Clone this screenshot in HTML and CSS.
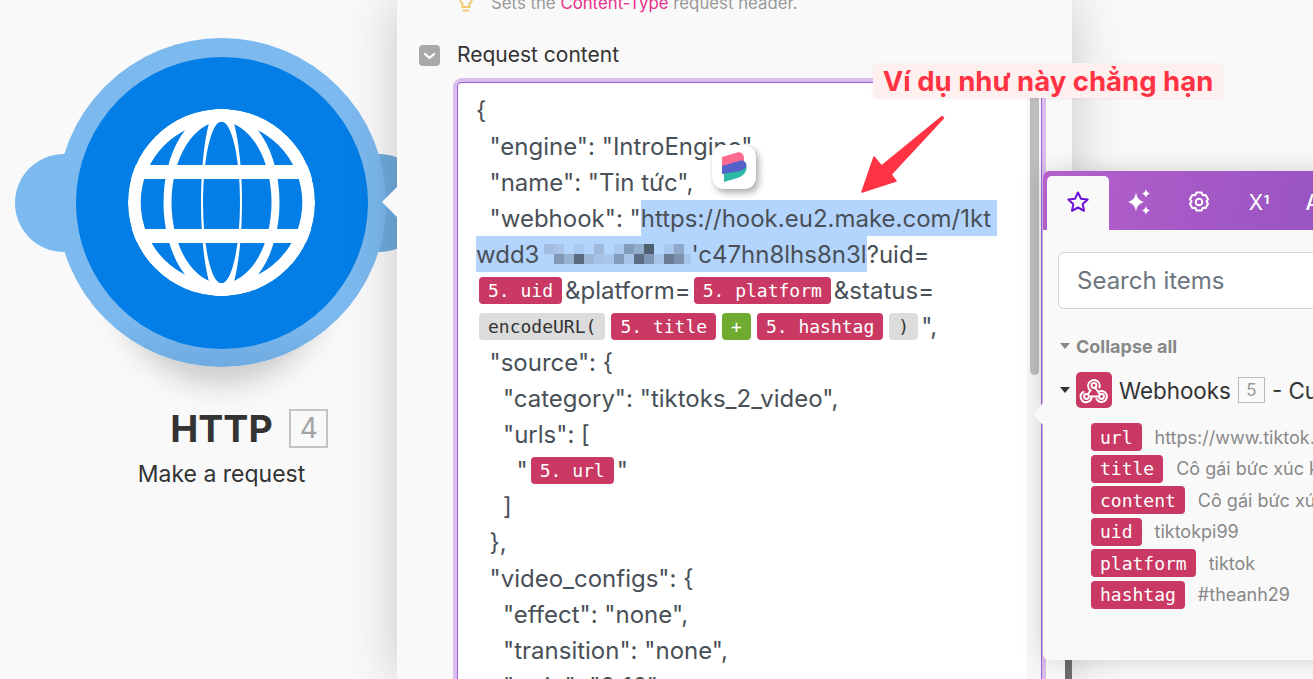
FILE: index.html
```html
<!DOCTYPE html>
<html lang="vi">
<head>
<meta charset="utf-8">
<title>HTTP - Make a request</title>
<link rel="stylesheet" href="styles.css">
</head>
<body>
<div class="canvas">
  <div class="module">
    <div class="node">
      <span class="bump bump-left"></span>
      <span class="bump bump-right"></span>
      <div class="node-ring">
        <div class="node-core">
          <svg class="globe" viewBox="0 0 187 187" width="187" height="187">
            <defs><clipPath id="gc"><circle cx="93.5" cy="93.5" r="93.5"/></clipPath></defs>
            <g clip-path="url(#gc)" fill="#fff">
              <path fill-rule="evenodd" d="M0 93.5a93.5 93.5 0 1 0 187 0a93.5 93.5 0 1 0-187 0ZM12.7 93.5a80.8 80.8 0 1 1 161.6 0a80.8 80.8 0 1 1-161.6 0Z"/>
              <path fill-rule="evenodd" d="M35.5 93.5a58 93 0 1 0 116 0a58 93 0 1 0-116 0ZM43.5 93.5a50 81 0 1 1 100 0a50 81 0 1 1-100 0Z"/>
              <path fill-rule="evenodd" d="M73 93.5a20.5 100 0 1 0 41 0a20.5 100 0 1 0-41 0ZM75 93.5a18.5 81 0 1 1 37 0a18.5 81 0 1 1-37 0Z"/>
              <rect x="0" y="56" width="187" height="14"/>
              <rect x="0" y="120" width="187" height="14"/>
            </g>
          </svg>
        </div>
      </div>
    </div>
    <div class="module-title">HTTP<span class="module-badge">4</span></div>
    <div class="module-sub">Make a request</div>
  </div>

  <section class="panel">
    <div class="hint">
      <svg class="bulb" viewBox="0 0 14 22" width="14" height="22"><path d="M7 1a6 6 0 0 0-3.5 10.8V15h7v-3.2A6 6 0 0 0 7 1ZM4.5 18.5h5" fill="none" stroke="#f3c872" stroke-width="2" stroke-linecap="round"/></svg>
      <span>Sets the <span class="code-pink">Content-Type</span> request header.</span>
    </div>
    <div class="field-label">
      <span class="check"><svg viewBox="0 0 21 21" width="21" height="21"><path d="M6 9l4.5 4L15 9" fill="none" stroke="#fff" stroke-width="2.2" stroke-linecap="round" stroke-linejoin="round"/></svg></span>
      <span class="field-text">Request content</span>
    </div>
    <div class="editor">
      <div class="code">
        <div class="line">{</div>
        <div class="line">  "engine": "IntroEngine",</div>
        <div class="line">  "name": "Tin tức",</div>
        <div class="line">  "webhook": "<span class="sel sel-first">https://hook.eu2.make.com/1kt</span></div>
        <div class="line"><span class="sel">wdd3<svg class="mosaic" viewBox="0 0 147 20" width="147" height="20"><g fill="#a3bde0"><rect x="0" width="10" height="10"/><rect x="10" width="10" height="10" fill="#a8c3e6"/><rect x="30" width="10" height="10" fill="#a9c8ee"/><rect x="50" width="10" height="10" fill="#9fb9dc"/><rect x="70" width="10" height="10" fill="#a9c8ee"/><rect x="80" width="10" height="10" fill="#829cbc"/><rect x="90" width="10" height="10" fill="#93aecd"/><rect x="100" width="10" height="10" fill="#4f5f72"/><rect x="120" width="10" height="10" fill="#a9c7ec"/><rect x="130" width="10" height="10" fill="#8ea8c9"/><rect x="10" y="10" width="10" height="10" fill="#8199b7"/><rect x="20" y="10" width="10" height="10" fill="#99b3d3"/><rect x="30" y="10" width="10" height="10" fill="#5a6b80"/><rect x="40" y="10" width="10" height="10" fill="#9cb6d8"/><rect x="50" y="10" width="10" height="10" fill="#a6c2e5"/><rect x="60" y="10" width="10" height="10" fill="#a9c5e9"/><rect x="70" y="10" width="10" height="10" fill="#839cbc"/><rect x="80" y="10" width="10" height="10" fill="#a9c6ea"/><rect x="90" y="10" width="10" height="10" fill="#5c6d84"/><rect x="100" y="10" width="10" height="10" fill="#7d95b3"/><rect x="110" y="10" width="10" height="10" fill="#a9c6ea"/><rect x="120" y="10" width="10" height="10" fill="#697c94"/><rect x="130" y="10" width="10" height="10" fill="#7c93b0"/><rect x="140" y="10" width="7" height="10" fill="#a9c6ea"/></g></svg>'c47hn8lhs8n3l</span>?uid=</div>
        <div class="line"><span class="pill">5. uid</span>&amp;platform=<span class="pill">5. platform</span>&amp;status=</div>
        <div class="line"><span class="pill pill-fn">encodeURL(</span><span class="pill">5. title</span><span class="pill pill-op">+</span><span class="pill">5. hashtag</span><span class="pill pill-fn">)</span>",</div>
        <div class="line">  "source": {</div>
        <div class="line">    "category": "tiktoks_2_video",</div>
        <div class="line">    "urls": [</div>
        <div class="line">      "<span class="pill">5. url</span>"</div>
        <div class="line">    ]</div>
        <div class="line">  },</div>
        <div class="line">  "video_configs": {</div>
        <div class="line">    "effect": "none",</div>
        <div class="line">    "transition": "none",</div>
        <div class="line">    "ratio": "9:16"</div>
      </div>
      <div class="scroll-track"><span class="scroll-thumb"></span></div>
    </div>
    <span class="panel-scroll"></span>
  </section>

  <div class="float-logo">
    <svg viewBox="0 0 25 32" width="25" height="32">
      <path d="M0 6L15 1.500C19 .5 22 3 22 8L22 14L0 23Z" fill="#fb6a90"/>
      <path d="M2 21L24.500 15C25 21 22 24 17 26.500L2 31Z" fill="#2bb9a6"/>
      <path d="M0 15L18 9.800C22 8.800 24.500 11.500 24.500 15C23 18 20 19.500 16 20.500L0 23Z" fill="#5361c8"/>
    </svg>
  </div>

  <div class="note">Ví dụ như này chẳng hạn</div>
  <svg class="note-arrow" viewBox="0 0 90 85" width="90" height="85">
    <path d="M81 2.500L82.500 4L30 60.500L35 67L1 78L13 43L20.500 52Z" fill="#ff3344" stroke="#ff3344" stroke-width="1.500" stroke-linejoin="round"/>
  </svg>

  <aside class="picker">
    <span class="picker-tip"></span>
    <div class="tabs">
      <div class="tab tab-active">
        <svg viewBox="0 0 24 24" width="24" height="24"><path d="M12 2.500l2.900 6.200 6.800.8-5 4.600 1.300 6.700-6-3.300-6 3.300 1.300-6.700-5-4.600 6.800-.8Z" fill="none" stroke="#6a0dd8" stroke-width="2" stroke-linejoin="round"/></svg>
      </div>
      <div class="tab">
        <svg viewBox="0 0 26 26" width="26" height="26" fill="#fff"><path d="M10 3.500c1 5 2.500 7.500 8 9.500-5.500 2-7 4.500-8 9.500-1-5-2.500-7.500-8-9.500 5.500-2 7-4.500 8-9.500Z"/><path d="M20 0c.5 2.500 1.300 3.500 4 4.500-2.700 1-3.500 2-4 4.500-.5-2.500-1.300-3.500-4-4.500 2.700-1 3.500-2 4-4.500Z"/><path d="M20 17c.5 2.500 1.300 3.500 4 4.500-2.700 1-3.500 2-4 4.500-.5-2.500-1.300-3.500-4-4.500 2.700-1 3.500-2 4-4.500Z"/></svg>
      </div>
      <div class="tab">
        <svg viewBox="0 0 24 24" width="24" height="24" fill="none" stroke="#fff" stroke-width="2"><path d="M9.500 2.500h5l1.200 2.700 2.900-.3 2.500 4.300-1.700 2.300 1.700 2.300-2.500 4.300-2.900-.3-1.200 2.700h-5l-1.200-2.700-2.900.3-2.500-4.300 1.700-2.300-1.700-2.300 2.500-4.300 2.900.3Z" stroke-linejoin="round"/><circle cx="12" cy="12" r="3.300"/></svg>
      </div>
      <div class="tab tab-text"><span>X<sup>1</sup></span></div>
      <div class="tab tab-text tab-a">A</div>
    </div>
    <div class="picker-body">
      <div class="search">Search items</div>
      <div class="collapse"><span class="caret caret-gray"></span>Collapse all</div>
      <div class="group">
        <span class="caret"></span>
        <span class="group-icon">
          <svg viewBox="0 0 36 36" width="36" height="36" fill="none" stroke="#fff" stroke-width="2" stroke-linecap="round">
            <circle cx="18" cy="13.500" r="2.400"/><circle cx="10.500" cy="24.500" r="2.400"/><circle cx="25.500" cy="24.500" r="2.400"/>
            <path d="M19 15.500L24 22.500M15 24.500H23M14.500 18.500L11.500 22.500"/>
            <path d="M14.500 18.500A5.800 5.800 0 1 1 23.500 15.500"/>
            <path d="M15.500 24.500A5.400 5.400 0 1 1 7.500 20"/>
            <path d="M20.500 27A5.500 5.500 0 1 0 23 19.500"/>
          </svg>
        </span>
        <span class="group-name">Webhooks</span>
        <span class="group-badge">5</span>
        <span class="group-name">- Custom webhook</span>
      </div>
      <ul class="items">
        <li class="item"><span class="pill pill-item">url</span><span>https://www.tiktok.com/@tiktokpi99/video</span></li>
        <li class="item"><span class="pill pill-item">title</span><span>Cô gái bức xúc khi bị lừa mua hàng online</span></li>
        <li class="item"><span class="pill pill-item">content</span><span>Cô gái bức xúc khi bị lừa mua hàng</span></li>
        <li class="item"><span class="pill pill-item">uid</span><span>tiktokpi99</span></li>
        <li class="item"><span class="pill pill-item">platform</span><span>tiktok</span></li>
        <li class="item"><span class="pill pill-item">hashtag</span><span>#theanh29</span></li>
      </ul>
    </div>
  </aside>
</div>
</body>
</html>
```
FILE: styles.css
```css
* { box-sizing: border-box; }
html, body { margin: 0; padding: 0; overflow: hidden; }
body { font-family: Inter, "Noto Sans", sans-serif; color: #333; }

.canvas {
  position: relative;
  width: 1313px;
  height: 679px;
  overflow: hidden;
  background: #f9f9f9;
}

/* scenario module */
.module {
  position: absolute;
  left: 57px;
  top: 38px;
  width: 329px;
  display: flex;
  flex-direction: column;
  align-items: center;
}
.node { position: relative; width: 329px; height: 329px; }
.bump {
  position: absolute;
  top: 116px;
  width: 98px;
  height: 98px;
  border-radius: 50%;
  background: #7cb9ef;
}
.bump-left { left: -42px; }
.bump-right { right: -42px; background: #70acdf; }
.node-ring {
  position: relative;
  width: 329px;
  height: 329px;
  border-radius: 50%;
  background: linear-gradient(#7cb9ef 85%, #6fabe0);
  display: flex;
  align-items: center;
  justify-content: center;
  box-shadow: 0 76px 30px -60px rgba(0, 0, 0, .2);
}
.node-core {
  width: 292px;
  height: 292px;
  border-radius: 50%;
  background: #027ee6;
  display: flex;
  align-items: center;
  justify-content: center;
}
.globe { display: block; }
.module-title {
  position: relative;
  margin-top: 40px;
  font-size: 37.5px;
  line-height: 44px;
  font-weight: 700;
  color: #333;
}
.module-badge {
  position: absolute;
  left: 119px;
  top: 2px;
  width: 39px;
  height: 39px;
  border: 2px solid #c4c4c4;
  color: #a3a3a3;
  font-size: 28px;
  font-weight: 400;
  line-height: 35px;
  text-align: center;
}
.module-sub {
  margin-top: 9px;
  font-size: 23px;
  line-height: 28px;
  color: #333;
}

/* settings panel */
.panel {
  position: relative;
  display: flow-root;
  margin-left: 397px;
  width: 675px;
  height: 679px;
  background: #f9f9f9;
  box-shadow: 0 0 50px rgba(0, 0, 0, .2);
}
.panel::before {
  content: "";
  position: absolute;
  left: -15px;
  top: 187px;
  border-style: solid;
  border-width: 15px 15px 15px 0;
  border-color: transparent #f9f9f9 transparent transparent;
}
.hint {
  display: flex;
  align-items: center;
  gap: 18px;
  height: 22px;
  margin-top: -8px;
  padding-left: 62px;
  font-size: 16.8px;
  color: #999;
}
.code-pink { color: #e8308c; }
.field-label {
  display: flex;
  align-items: center;
  gap: 17px;
  height: 22px;
  margin-top: 30px;
  padding-left: 22px;
  font-size: 21px;
  color: #333;
}
.field-text { margin-bottom: 2px; }
.check {
  width: 21px;
  height: 21px;
  border-radius: 4px;
  background: #a9a9a9;
  display: block;
}
.check svg { display: block; }
.editor {
  display: flex;
  margin-top: 16px;
  margin-left: 60px;
  width: 585px;
  height: 597px;
  background: #fff;
  border: 1px solid #9a5fdb;
  border-bottom: 0;
  border-radius: 5px 5px 0 0;
  box-shadow: 0 0 0 4px #d9bdee;
  overflow: hidden;
}
.code {
  flex: 1;
  min-width: 0;
  padding: 9px 0 0 18px;
  font-size: 24px;
  color: #495057;
}
.line {
  display: flex;
  align-items: center;
  height: 36px;
  white-space: pre;
}
.sel {
  display: inline-flex;
  align-items: center;
  height: 36px;
  background: #b3d4fd;
}
.sel-first { padding-right: 6px; }
.mosaic { display: block; margin-left: 5px; }
.pill {
  display: inline-flex;
  align-items: center;
  height: 27px;
  margin: 0 3px;
  padding: 0 9px;
  border-radius: 4px;
  background: #c93963;
  color: #fff;
  font-family: "DejaVu Sans Mono", monospace;
  font-size: 18px;
}
.pill-fn { background: #dcdcdc; color: #333; }
.pill-op { background: #6fab2f; }
.scroll-track {
  width: 14px;
  flex: none;
  background: #f7f7f7;
  padding: 0 2px 0 3px;
}
.scroll-thumb {
  display: block;
  width: 9px;
  height: 292px;
  border-radius: 0 0 5px 5px;
  background: #bdbdbd;
}
.panel-scroll {
  position: absolute;
  left: 668px;
  top: 620px;
  width: 7px;
  height: 59px;
  background: #6d6d6d;
}

/* floating extension logo */
.float-logo {
  position: absolute;
  left: 712px;
  top: 145px;
  width: 44px;
  height: 44px;
  border-radius: 11px;
  background: #fff;
  box-shadow: 3px 4px 6px rgba(0, 0, 0, .3), 0 0 1px rgba(0, 0, 0, .3);
  display: flex;
  align-items: center;
  justify-content: center;
}

/* annotation */
.note {
  position: absolute;
  left: 873px;
  top: 63px;
  width: 350px;
  height: 35px;
  border-radius: 4px;
  background: #fff0f0;
  color: #ff3344;
  font-size: 27.5px;
  font-weight: 700;
  line-height: 37px;
  text-align: center;
  white-space: nowrap;
  box-shadow: 0 1px 3px rgba(0, 0, 0, .06);
}
.note-arrow {
  position: absolute;
  left: 861px;
  top: 114px;
}

/* item picker */
.picker {
  position: absolute;
  left: 1043px;
  top: 171px;
  width: 420px;
  height: 489px;
  border-radius: 6px;
  background: #f9f9f9;
  box-shadow: 0 0 24px rgba(0, 0, 0, .16);
}
.picker-tip {
  position: absolute;
  left: -10px;
  top: 232px;
  border-style: solid;
  border-width: 11px 10px 11px 0;
  border-color: transparent #f9f9f9 transparent transparent;
}
.tabs {
  display: flex;
  align-items: flex-end;
  height: 59px;
  padding-left: 4px;
  border-radius: 6px 6px 0 0;
  background: linear-gradient(100deg, #b55fcc, #8a4fbb);
  color: #fff;
}
.tab {
  display: flex;
  align-items: center;
  justify-content: center;
  width: 60px;
  height: 54px;
  padding-bottom: 2px;
}
.tab-active {
  width: 62px;
  border-radius: 5px 5px 0 0;
  background: #f9f9f9;
}
.tab-text { font-size: 21px; }
.tab-text sup { font-size: 12px; font-weight: 700; margin-left: 1px; vertical-align: 6px; line-height: 0; }
.tab-a { margin-left: -6px; font-weight: 500; }
.picker-body { padding: 22px 0 0 15px; }
.search {
  width: 380px;
  height: 57px;
  padding-left: 18px;
  border: 1px solid #d5d5d5;
  border-radius: 6px;
  background: #fff;
  color: #6c757d;
  font-size: 24px;
  line-height: 55px;
}
.caret {
  display: block;
  flex: none;
  width: 0;
  height: 0;
  border-style: solid;
  border-width: 6px 5px 0;
  border-color: #333 transparent transparent;
}
.caret-gray { border-top-color: #888; }
.collapse {
  display: flex;
  align-items: center;
  gap: 6px;
  height: 22px;
  margin-top: 26px;
  padding-left: 2px;
  color: #888;
  font-size: 18px;
  font-weight: 700;
}
.group {
  display: flex;
  align-items: center;
  gap: 7px;
  height: 36px;
  margin-top: 15px;
  padding-left: 2px;
  font-size: 22.4px;
  white-space: nowrap;
  color: #333;
}
.group .caret { margin-right: -1px; }
.group-icon {
  display: block;
  flex: none;
  width: 36px;
  height: 36px;
  border-radius: 5px;
  background: #c93963;
}
.group-icon svg { display: block; }
.group-badge {
  flex: none;
  width: 27px;
  height: 26px;
  border: 1px solid #bbb;
  color: #999;
  font-size: 17px;
  line-height: 24px;
  text-align: center;
}
.items {
  list-style: none;
  margin: 15px 0 0;
  padding: 0 0 0 33px;
  display: flex;
  flex-direction: column;
  gap: 3.5px;
}
.item {
  display: flex;
  align-items: center;
  gap: 13px;
  font-size: 18px;
  color: #888;
  white-space: nowrap;
}
.pill-item { margin: 0; height: 28px; }
```
